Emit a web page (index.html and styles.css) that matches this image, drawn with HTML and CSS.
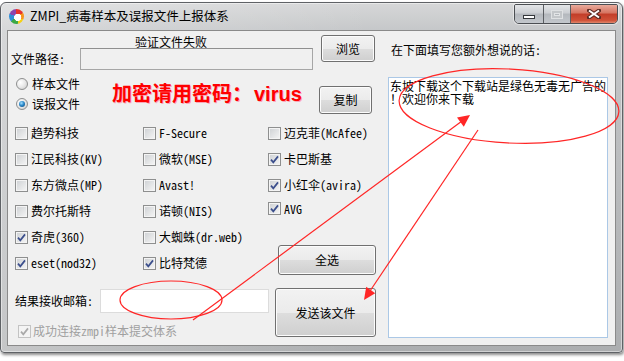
FILE: index.html
```html
<!DOCTYPE html>
<html lang="zh-CN">
<head>
    <meta charset="UTF-8">
    <title>ZMPI_病毒样本及误报文件上报体系</title>
    <link rel="stylesheet" href="styles.css">
</head>
<body>
    <div class="window">
        <div class="titlebar">
            <span class="app-icon"></span>
            <span class="title">ZMPI_病毒样本及误报文件上报体系</span>
            <div class="caption-btns">
                <span class="cap cap-min"><i></i></span>
                <span class="cap cap-max"><i></i></span>
                <span class="cap cap-close">
                    <svg width="14" height="10" viewBox="0 0 14 10">
                        <path d="M2 1.5 L12 8.5 M12 1.5 L2 8.5" stroke="#5b2a22" stroke-width="4" stroke-linecap="square" fill="none"/>
                        <path d="M2 1.5 L12 8.5 M12 1.5 L2 8.5" stroke="#fff" stroke-width="2" fill="none"/>
                    </svg>
                </span>
            </div>
        </div>

        <div class="client">
            <div class="left">
                <div class="head">
                    <div class="path-block">
                        <div class="status">验证文件失败</div>
                        <div class="path-row">
                            <span>文件路径:</span>
                            <input class="path-input" type="text">
                        </div>
                    </div>
                    <button class="btn btn-browse">浏览</button>
                </div>

                <div class="mode">
                    <div class="radios">
                        <label class="radio"><span class="dot"></span>样本文件</label>
                        <label class="radio"><span class="dot on"></span>误报文件</label>
                    </div>
                    <div class="password">加密请用密码<span class="colon">：</span>virus</div>
                    <button class="btn btn-copy">复制</button>
                </div>

                <div class="engines">
                    <label class="check"><span class="box"></span>趋势科技</label>
                    <label class="check"><span class="box"></span>F-Secure</label>
                    <label class="check"><span class="box"></span>迈克菲(McAfee)</label>

                    <label class="check"><span class="box"></span>江民科技(KV)</label>
                    <label class="check"><span class="box"></span>微软(MSE)</label>
                    <label class="check"><span class="box"><svg viewBox="0 0 11 11"><path d="M2 5.6 L4.3 8.3 L9 2.4"/></svg></span>卡巴斯基</label>

                    <label class="check"><span class="box"></span>东方微点(MP)</label>
                    <label class="check"><span class="box"></span>Avast!</label>
                    <label class="check"><span class="box"><svg viewBox="0 0 11 11"><path d="M2 5.6 L4.3 8.3 L9 2.4"/></svg></span>小红伞(avira)</label>

                    <label class="check"><span class="box"></span>费尔托斯特</label>
                    <label class="check"><span class="box"></span>诺顿(NIS)</label>
                    <label class="check check-avg"><span class="box"><svg viewBox="0 0 11 11"><path d="M2 5.6 L4.3 8.3 L9 2.4"/></svg></span>AVG</label>

                    <label class="check"><span class="box"><svg viewBox="0 0 11 11"><path d="M2 5.6 L4.3 8.3 L9 2.4"/></svg></span>奇虎(360)</label>
                    <label class="check"><span class="box"></span>大蜘蛛(dr.web)</label>

                    <button class="btn btn-all">全选</button>

                    <label class="check"><span class="box"><svg viewBox="0 0 11 11"><path d="M2 5.6 L4.3 8.3 L9 2.4"/></svg></span>eset(nod32)</label>
                    <label class="check"><span class="box"><svg viewBox="0 0 11 11"><path d="M2 5.6 L4.3 8.3 L9 2.4"/></svg></span>比特梵德</label>
                </div>

                <div class="send">
                    <div class="send-left">
                        <div class="mail-row">
                            <span>结果接收邮箱:</span>
                            <input class="mail-input" type="text">
                        </div>
                        <label class="check disabled"><span class="box"><svg viewBox="0 0 11 11"><path d="M2 5.6 L4.3 8.3 L9 2.4"/></svg></span>成功连接zmpi样本提交体系</label>
                    </div>
                    <button class="btn btn-send">发送该文件</button>
                </div>
            </div>

            <div class="right">
                <div class="note-label">在下面填写您额外想说的话:</div>
                <div class="note">东坡下载这个下载站是绿色无毒无广告的！欢迎你来下载</div>
            </div>
        </div>
    </div>

    <!-- red hand-drawn marks over the screenshot -->
    <svg class="marks" width="624" height="361" viewBox="0 0 624 361">
        <g fill="none" stroke="#ff2626" stroke-width="1.2">
            <ellipse cx="509" cy="106" rx="110" ry="37" transform="rotate(3 509 106)"/>
            <ellipse cx="171" cy="300" rx="51" ry="19"/>
            <line x1="193" y1="320" x2="462" y2="121"/>
            <line x1="478" y1="130" x2="370" y2="291"/>
        </g>
        <g fill="#ff2626">
            <polygon points="470,115 457,117.5 463.8,126.8"/>
            <polygon points="364,300 375.2,293.2 366.2,286.8"/>
        </g>
    </svg>
</body>
</html>
```

FILE: styles.css
```css
* {
    margin: 0;
    padding: 0;
    box-sizing: border-box;
}

body {
    width: 624px;
    height: 361px;
    position: relative;
    overflow: hidden;
    background: #fff;
    font-family: "Noto Sans Mono CJK SC", "Noto Sans CJK SC", sans-serif;
    font-size: 12px;
    line-height: 14px;
    color: #000;
}

.window {
    width: 623px;
    height: 351px;
    margin-top: 2px;
    border: 1px solid #5f6266;
    border-radius: 6px 6px 4px 4px;
    background:
        linear-gradient(90deg, rgba(255, 255, 255, 0.3), rgba(255, 255, 255, 0) 60%),
        linear-gradient(180deg, #d6d7d8 0, #c4c6c8 30px, #acaeb0 100%);
    box-shadow: 1px 2px 3px rgba(0, 0, 0, 0.45), inset 0 0 0 1px rgba(255, 255, 255, 0.45);
    display: flex;
    flex-direction: column;
}

/* title bar */

.titlebar {
    height: 28px;
    display: flex;
    align-items: center;
}

.app-icon {
    width: 15px;
    height: 15px;
    margin-left: 8px;
    border-radius: 50%;
    background:
        radial-gradient(circle at 58% 56%, #fff 0, #fff 28%, rgba(255, 255, 255, 0) 32%),
        conic-gradient(#e8342c 0 60deg, #f7941d 60deg 115deg, #f5d116 115deg 165deg, #3aa845 165deg 230deg, #2f8fd8 230deg 290deg, #8e44ad 290deg 360deg);
    flex: none;
}

.title {
    margin-left: 6px;
    font-family: "Noto Sans CJK SC", sans-serif;
    font-size: 12.5px;
    line-height: 1;
}

.caption-btns {
    display: flex;
    align-self: flex-start;
    margin: 1px 4px 0 auto;
    width: 104px;
    height: 20px;
    border: 1px solid #4b4e52;
    border-radius: 2px 2px 5px 5px;
    overflow: hidden;
    box-shadow: 0 0 0 1px rgba(255, 255, 255, 0.45);
}

.cap {
    height: 100%;
    display: flex;
    align-items: center;
    justify-content: center;
    background: linear-gradient(#e3e5e8 0, #cbced2 45%, #b4b8bd 50%, #c3c7cc 100%);
    border-right: 1px solid #5a5d61;
}

.cap-min { width: 29px; }
.cap-max { width: 27px; }

.cap-min i {
    width: 12px;
    height: 4px;
    margin-top: 6px;
    background: #fff;
    border: 1px solid #34373b;
}

.cap-max i {
    width: 12px;
    height: 9px;
    border: 1px solid #dfe1e3;
    box-shadow: inset 0 0 0 2px #c3c6c9, inset 0 0 0 3px #e2e4e6;
}

.cap-close {
    flex: 1;
    border-right: none;
    background: linear-gradient(#e9ab9c 0, #d57360 45%, #c23d28 50%, #cf5138 85%, #e0866c 100%);
}

/* client area */

.client {
    flex: 1;
    margin: 0 6px 6px 6px;
    border: 1px solid #8a8a8a;
    background: #f0f0f0;
    display: flex;
    padding: 0 7px 7px 0;
}

.left {
    width: 368px;
    flex: none;
}

.head {
    display: flex;
}

.path-block {
    width: 305px;
}

.status {
    margin-top: 5px;
    padding-left: 127px;
    line-height: 12px;
}

.path-row {
    height: 22px;
    display: flex;
    align-items: center;
    padding-left: 3px;
}

.path-input {
    margin-left: auto;
    width: 233px;
    height: 22px;
    border: 1px solid #a6a6a6;
    border-top-color: #8f8f8f;
    background: #f0f0f0;
    outline: none;
}

.btn {
    font-family: "Noto Sans CJK SC", sans-serif;
    font-size: 12px;
    line-height: 1;
    color: #000;
    border: 1px solid #707070;
    border-radius: 3px;
    background: linear-gradient(#f2f2f2 0, #ebebeb 50%, #dddddd 51%, #cfcfcf 100%);
    box-shadow: inset 0 0 0 1px #fcfcfc;
    flex: none;
}

.btn-browse {
    width: 54px;
    height: 27px;
    margin: 4px 0 0 8px;
}

.mode {
    display: flex;
    align-items: center;
    height: 41px;
    margin-top: 3px;
}

.radios {
    width: 104px;
    padding-left: 8px;
    flex: none;
}

.radio {
    height: 20px;
    display: flex;
    align-items: center;
}

.dot {
    width: 12px;
    height: 12px;
    margin-right: 4px;
    border-radius: 50%;
    border: 1px solid #8e8f8f;
    background: radial-gradient(circle at 35% 35%, #fff 0, #e8e8e8 50%, #c6c6c6 100%);
    display: flex;
    align-items: center;
    justify-content: center;
    flex: none;
}

.dot.on::after {
    content: '';
    width: 6px;
    height: 6px;
    border-radius: 50%;
    background: radial-gradient(circle at 40% 35%, #a6e0ff 0, #2b8acb 45%, #0c3e6d 100%);
}

.password {
    font-family: "Liberation Sans", "Noto Sans CJK SC", sans-serif;
    font-size: 20px;
    font-weight: bold;
    line-height: 24px;
    color: #ff0000;
    text-shadow: 1px 1px 0 rgba(255, 120, 150, 0.6);
    white-space: nowrap;
}

.password .colon {
    display: inline-block;
    width: 20px;
    text-align: center;
    margin-right: 2px;
}

.btn-copy {
    width: 53px;
    height: 28px;
    margin: 0 4px 0 auto;
    align-self: flex-end;
}

/* engine list */

.engines {
    margin-top: 6px;
    padding-left: 7px;
    display: grid;
    grid-template-columns: 128px 125px 1fr;
    grid-auto-rows: 26px;
}

.check {
    display: flex;
    align-items: center;
    white-space: nowrap;
}

.check-avg {
    margin-top: -5px;
}

.box {
    width: 13px;
    height: 13px;
    margin-right: 3px;
    border: 1px solid #8e8f8f;
    background: linear-gradient(135deg, #cdd0d3, #f6f6f6);
    box-shadow: inset 0 0 0 1px #f4f4f4;
    display: flex;
    align-items: center;
    justify-content: center;
    flex: none;
}

.box svg {
    width: 11px;
    height: 11px;
}

.box path {
    fill: none;
    stroke: #3b4e8c;
    stroke-width: 1.7;
}

.btn-all {
    grid-column: 3;
    grid-row: 5 / span 2;
    align-self: end;
    width: 98px;
    height: 30px;
    margin: 0 0 1px 10px;
}

/* send row */

.send {
    display: flex;
    margin-top: 12px;
}

.send-left {
    width: 267px;
    flex: none;
}

.mail-row {
    height: 24px;
    margin-top: 1px;
    padding-left: 7px;
    display: flex;
    align-items: center;
}

.mail-input {
    width: 169px;
    height: 24px;
    margin-left: 7px;
    border: 1px solid #dcdcdc;
    background: #fff;
    outline: none;
}

.check.disabled {
    margin-top: 11px;
    padding-left: 10px;
    color: #a0a0a0;
}

.disabled .box {
    margin-right: 2px;
    border-color: #c3c3c3;
    background: #f4f4f4;
    box-shadow: none;
}

.disabled .box path {
    stroke: #a9a9a9;
}

.btn-send {
    width: 101px;
    height: 49px;
}

/* right column */

.right {
    width: 220px;
    margin-left: 12px;
    display: flex;
    flex-direction: column;
}

.note-label {
    margin-top: 12px;
    padding-left: 3px;
    white-space: nowrap;
}

.note {
    flex: 1;
    margin-top: 20px;
    padding: 1px 0 0 1px;
    border: 1px solid #abc8e6;
    background: #fff;
    line-height: 13px;
    line-break: anywhere;
    word-break: break-all;
}

/* annotation layer */

.marks {
    position: absolute;
    left: 0;
    top: 0;
    pointer-events: none;
}
```
